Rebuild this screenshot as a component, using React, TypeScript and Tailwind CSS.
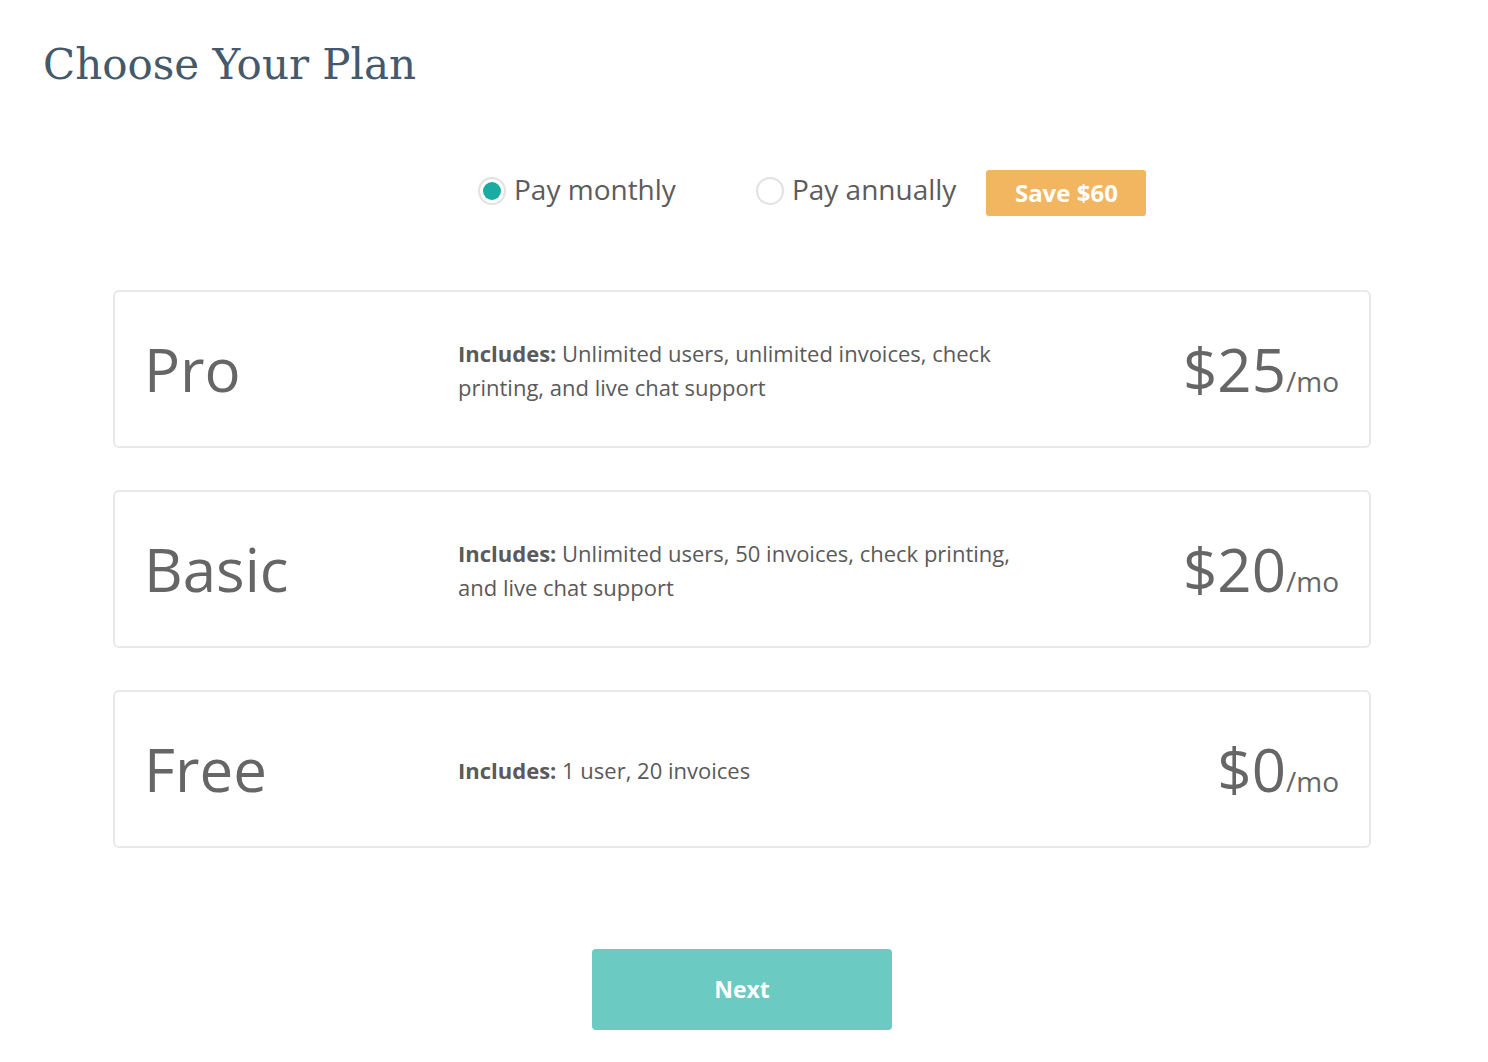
import React, { useState } from 'react';

const plans = [
  { name: 'Pro', features: 'Unlimited users, unlimited invoices, check printing, and live chat support', price: 25 },
  { name: 'Basic', features: 'Unlimited users, 50 invoices, check printing, and live chat support', price: 20 },
  { name: 'Free', features: '1 user, 20 invoices', price: 0 },
];

const Radio = ({ checked }: { checked: boolean }) => (
  <span className="flex h-[28px] w-[28px] items-center justify-center rounded-full border-2 border-[#e2e2e2] bg-white">
    {checked && <span className="h-[18px] w-[18px] rounded-full bg-[#1aaca1]" />}
  </span>
);

export default function App() {
  const [billing, setBilling] = useState<'monthly' | 'annually'>('monthly');

  return (
    <div className="min-h-screen bg-white font-['Open_Sans',sans-serif] text-[#666]">
      <h1 className="pl-[43px] pt-[37px] font-['DejaVu_Serif',serif] text-[42px] leading-[56px] text-[#44596b]">
        Choose Your Plan
      </h1>

      {/* Billing toggle */}
      <div className="mt-[77px] flex items-center pl-[478px]">
        <button className="-mt-[4px] flex items-center gap-[8px]" onClick={() => setBilling('monthly')}>
          <Radio checked={billing === 'monthly'} />
          <span className="relative -top-[2px] text-[28px] leading-[40px] text-[#5c5c5c]">Pay monthly</span>
        </button>
        <button className="-mt-[4px] ml-[80px] flex items-center gap-[8px]" onClick={() => setBilling('annually')}>
          <Radio checked={billing === 'annually'} />
          <span className="relative -top-[2px] text-[28px] leading-[40px] text-[#5c5c5c]">Pay annually</span>
        </button>
        <span className="ml-[30px] flex h-[46px] w-[160px] items-center justify-center rounded-[3px] bg-[#f2b661] text-[24px] font-bold text-white">
          Save $60
        </span>
      </div>

      {/* Plans */}
      <div className="mx-[113px] mt-[74px] flex w-[1258px] flex-col gap-[42px]">
        {plans.map((p) => (
          <div
            key={p.name}
            className="flex h-[158px] items-center rounded-[6px] border-2 border-[#e8e8e8] pl-[29px] pr-[30px]"
          >
            <div className="w-[314px] text-[60px] leading-none text-[#666]">{p.name}</div>
            <p className="w-[565px] pt-[2px] text-[22px] leading-[34px] text-[#5a5a5a]">
              <span className="font-bold">Includes:</span> {p.features}
            </p>
            <div className="ml-auto flex items-baseline pt-[2px] text-[#666]">
              <span className="text-[60px] leading-none">${p.price}</span>
              <span className="text-[28px]">/mo</span>
            </div>
          </div>
        ))}
      </div>

      <div className="mt-[101px] flex justify-center pr-[4px]">
        <button className="h-[81px] w-[300px] rounded-[4px] bg-[#6bcac2] text-[23px] font-bold text-white">
          Next
        </button>
      </div>
    </div>
  );
}
